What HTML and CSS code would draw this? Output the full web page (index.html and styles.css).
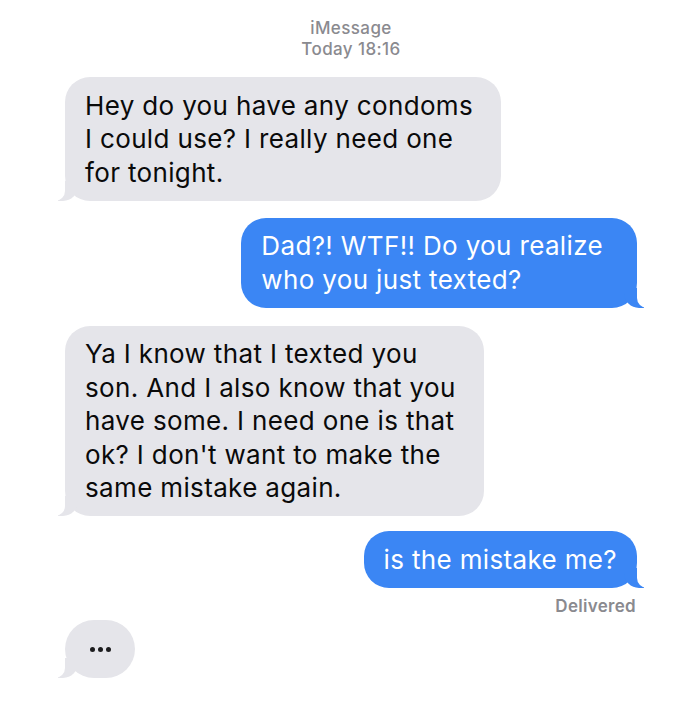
FILE: index.html
```html
<!DOCTYPE html>
<html lang="en">
<head>
<meta charset="utf-8">
<title>iMessage</title>
<link rel="stylesheet" href="styles.css">
</head>
<body>
<div class="chat">
  <div class="header">
    <div>iMessage</div>
    <div>Today 18:16</div>
  </div>
  <div class="bubble recv b1">Hey do you have any condoms<br>I could use? I really need one<br>for tonight.</div>
  <div class="bubble sent b2">Dad?! WTF!! Do you realize<br>who you just texted?</div>
  <div class="bubble recv b3">Ya I know that I texted you<br>son. And I also know that you<br>have some. I need one is that<br>ok? I don't want to make the<br>same mistake again.</div>
  <div class="bubble sent b4">is the mistake me?</div>
  <div class="status">Delivered</div>
  <div class="typing recv"><span class="dot"></span><span class="dot"></span><span class="dot"></span></div>
</div>
</body>
</html>
```

FILE: styles.css
```css
html, body {
  margin: 0;
  padding: 0;
  background: #ffffff;
}

body {
  font-family: "Inter", "Liberation Sans", sans-serif;
  color: #0a0a0a;
}

.chat {
  display: flex;
  flex-direction: column;
  padding: 18px 63px 0 65px;
}

.header {
  text-align: center;
  font-size: 17px;
  line-height: 21px;
  font-weight: 500;
  letter-spacing: 0.4px;
  color: #8a8a8f;
  margin-bottom: 17px;
}

.bubble {
  position: relative;
  font-size: 26px;
  line-height: 33.5px;
  padding: 11.5px 28px 11.5px 20px;
  border-radius: 25px;
  letter-spacing: 0.35px;
}

.recv {
  align-self: flex-start;
  background: #e5e5ea;
  color: #0a0a0a;
}

.sent {
  align-self: flex-end;
  background: #3b86f4;
  color: #ffffff;
}

.b2 { margin-top: 17px; padding-right: 34px; }
.b3 { margin-top: 18px; }
.b4 { margin-top: 15px; padding-right: 20px; }

.recv::before,
.recv::after,
.sent::before,
.sent::after {
  content: "";
  position: absolute;
  bottom: 0;
  height: 20px;
}

.recv::before {
  z-index: 0;
  left: -7px;
  width: 20px;
  background: #e5e5ea;
  border-bottom-right-radius: 15px;
}

.recv::after {
  z-index: 1;
  left: -10px;
  width: 10px;
  background: #ffffff;
  border-bottom-right-radius: 10px;
}

.sent::before {
  z-index: 0;
  right: -7px;
  width: 20px;
  background: #3b86f4;
  border-bottom-left-radius: 15px;
}

.sent::after {
  z-index: 1;
  right: -10px;
  width: 10px;
  background: #ffffff;
  border-bottom-left-radius: 10px;
}

.status {
  align-self: flex-end;
  margin-top: 8px;
  margin-right: 1px;
  font-size: 17px;
  line-height: 20px;
  font-weight: 600;
  letter-spacing: 0.3px;
  color: #8a8a8f;
}

.typing {
  position: relative;
  margin-top: 4px;
  width: 70px;
  height: 58px;
  border-radius: 29px;
  display: flex;
  align-items: center;
  justify-content: center;
  gap: 3px;
  padding-top: 2px;
  box-sizing: border-box;
}

.dot {
  position: relative;
  z-index: 2;
  width: 5px;
  height: 5px;
  border-radius: 50%;
  background: #1c1c1e;
}
```
